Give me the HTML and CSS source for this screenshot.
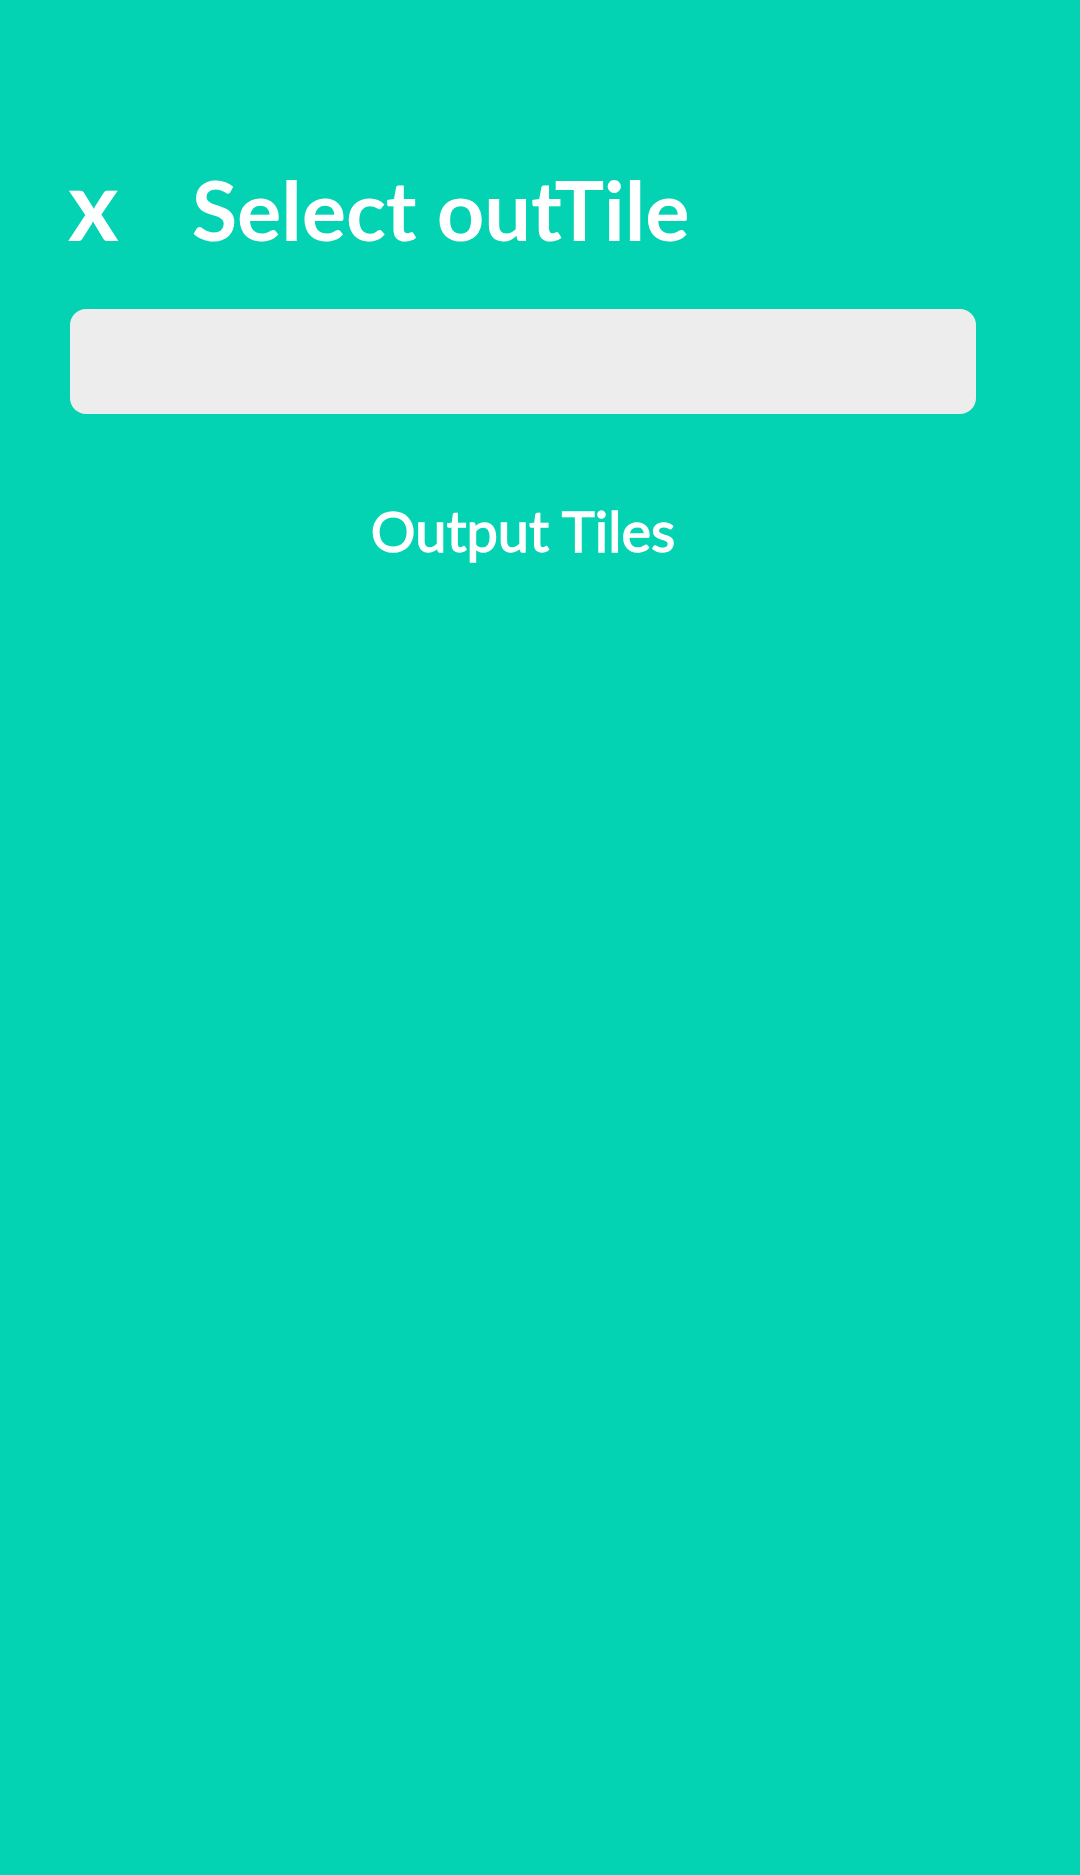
FILE: index.html
```html
<!DOCTYPE html>
<html>
<head>
<meta charset="utf-8">
<link rel="stylesheet" href="styles.css">
</head>
<body>
<div class="page">
  <div class="header">
    <span class="close">x</span>
    <h1 class="title">Select outTile</h1>
  </div>
  <div class="content">
    <div class="search"></div>
    <h2 class="section-title">Output Tiles</h2>
  </div>
</div>
</body>
</html>
```
FILE: styles.css
```css
html, body {
  margin: 0;
  padding: 0;
  background: #03d3b2;
}
.page {
  width: 1080px;
  min-height: 1875px;
  background: #03d3b2;
  font-family: "Lato", "Liberation Sans", sans-serif;
  color: #ffffff;
}
.header {
  display: flex;
  align-items: baseline;
  padding: 155px 0 0 68px;
  gap: 73px;
}
.close {
  font-size: 97px;
  font-weight: 700;
  line-height: 1;
}
.title {
  margin: 0;
  font-size: 83px;
  font-weight: 700;
  line-height: 1;
  letter-spacing: -0.1px;
}
.content {
  width: 906px;
  margin-left: 70px;
  padding-top: 57px;
}
.search {
  height: 105px;
  background: #ededed;
  border-radius: 16px;
}
.section-title {
  margin: 89px 0 0 0;
  text-align: center;
  font-size: 56px;
  font-weight: 400;
  line-height: 1;
  -webkit-text-stroke: 1.4px #ffffff;
}
```
